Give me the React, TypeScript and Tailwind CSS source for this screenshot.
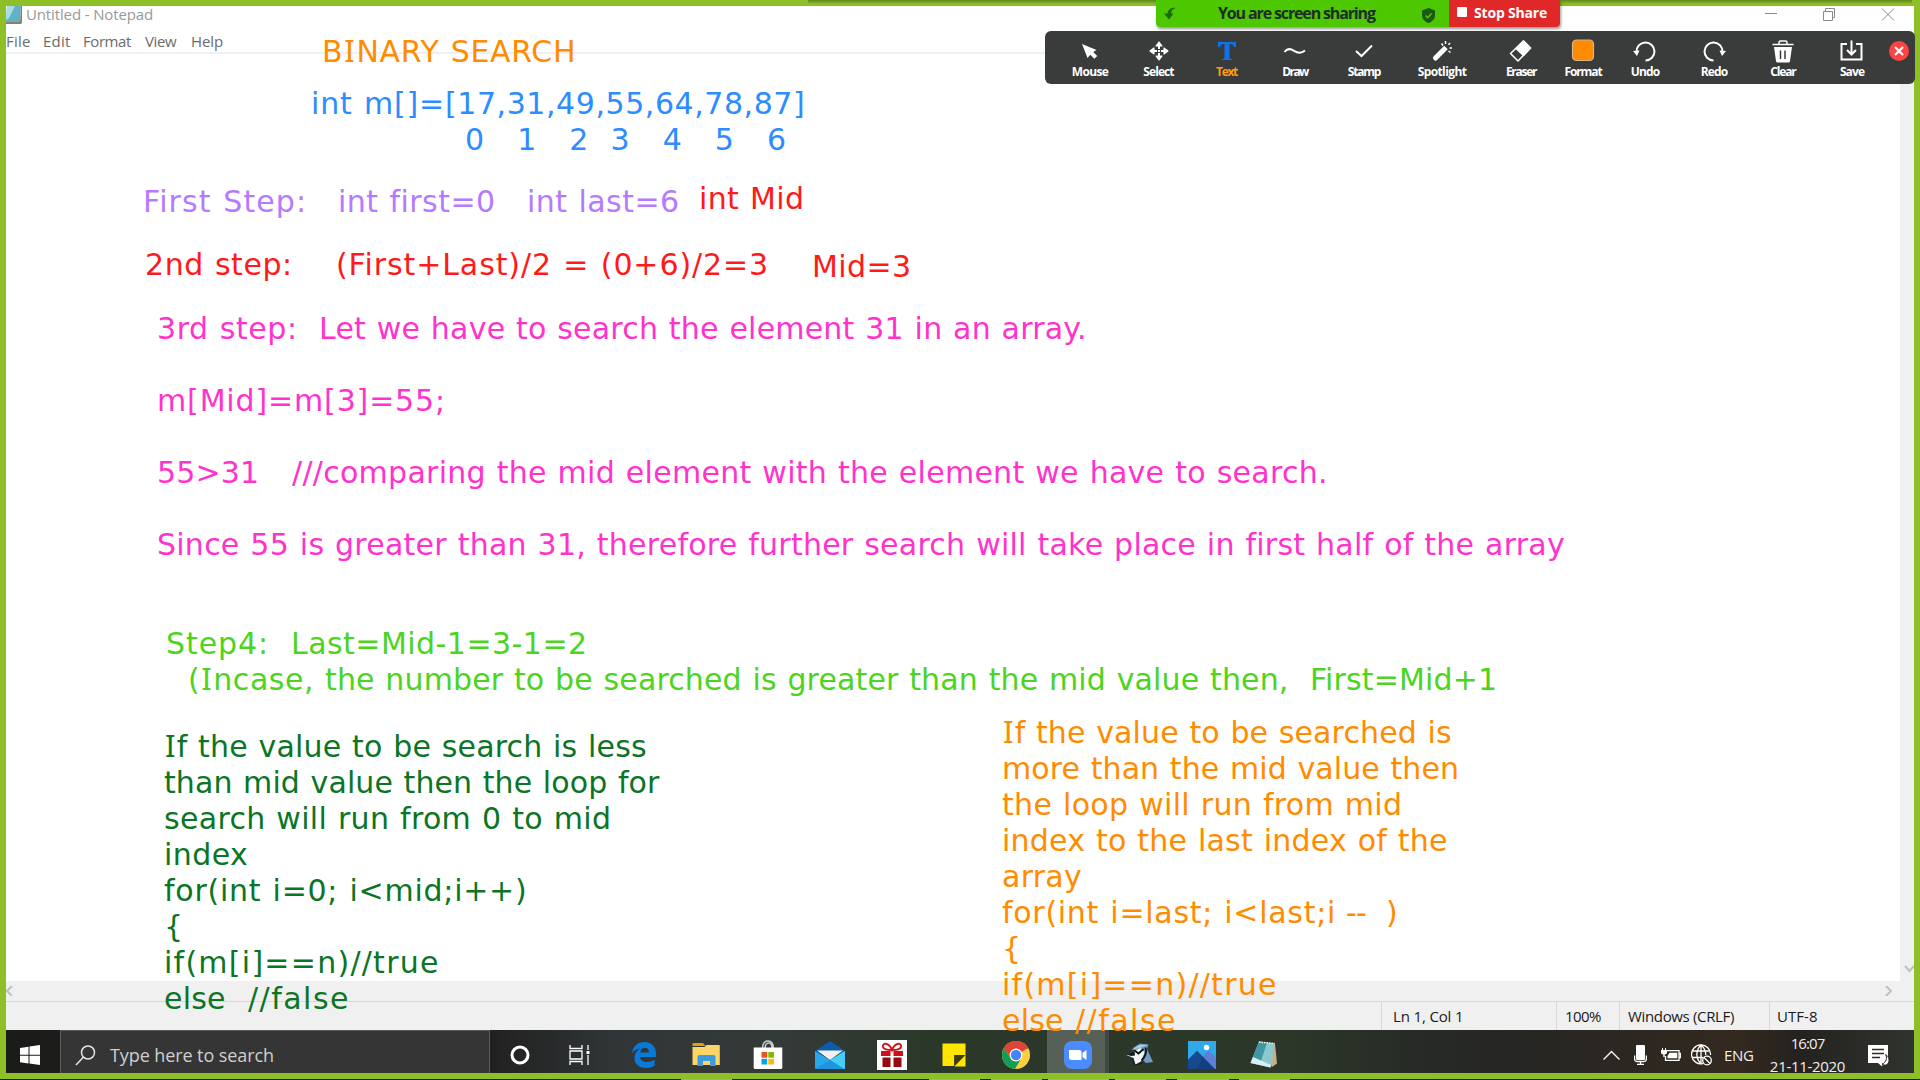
import React, { useLayoutEffect, useRef } from "react";

type FitProps = { text: string; w: number; className?: string };

/** A single line of text whose tracking is adjusted so that its last glyph ends `w` pixels from its origin. */
function Fit({ text, w, className = "" }: FitProps) {
  const ref = useRef<HTMLSpanElement>(null);
  useLayoutEffect(() => {
    const el = ref.current;
    if (!el || text.length < 2) return;
    const cs = getComputedStyle(el);
    const ctx = document.createElement("canvas").getContext("2d");
    if (!ctx) return;
    ctx.font = `${cs.fontWeight} ${cs.fontSize} ${cs.fontFamily}`;
    const last = ctx.measureText(text.slice(-1));
    const bearing = last.width - last.actualBoundingBoxRight;
    el.style.letterSpacing = "0px";
    const natural = el.getBoundingClientRect().width - bearing;
    el.style.letterSpacing = `${(w - natural) / (text.length - 1)}px`;
  }, [text, w]);
  const serifI = className.includes("serif-i");
  return (
    <span className={`block whitespace-pre ${className}`}>
      <span ref={ref}>
        {serifI
          ? text.split(/(I)/).map((part, i) =>
              part === "I" ? (
                <span key={i} className="mx-px font-['Noto_Sans',sans-serif] text-[31px] leading-none">I</span>
              ) : (
                part
              ),
            )
          : text}
      </span>
    </span>
  );
}

/** text, width of its ink, and (when another segment follows) the distance to that segment's origin */
type Segment = [string, number, number?];
type Note = { pos: string; lines: Segment[][] };

const notes: Note[] = [
  { pos: "left-[322px] top-[34px] text-[#ff8c00]", lines: [[["BINARY SEARCH", 251]]] },
  {
    pos: "left-[311px] top-[86px] text-[#2d8cff]",
    lines: [[["int m[]=", 130, 134], ["[17,31,49,55,64,78,87]", 358]]],
  },
  { pos: "left-[465px] top-[122px] text-[#2d8cff]", lines: [[["0   1   2  3   4   5   6", 320]]] },
  {
    pos: "left-[143px] top-[184px] text-[#b57aff]",
    lines: [[["First Step:", 160, 195], ["int first=0", 156, 189], ["int last=6", 151]]],
  },
  { pos: "left-[699px] top-[181px] text-[#ff1a1a]", lines: [[["int Mid", 103]]] },
  {
    pos: "left-[145px] top-[247px] text-[#ff1a1a]",
    lines: [[["2nd step:", 144, 191], ["(First+Last)/2 = (0+6)/2=3", 430]]],
  },
  { pos: "left-[812px] top-[249px] text-[#ff1a1a]", lines: [[["Mid=3", 97]]] },
  {
    pos: "left-[157px] top-[311px] text-[#ff33cc]",
    lines: [
      [["3rd step:", 137, 162], ["Let we have to search the element 31 in an array.", 765]],
      [],
      [["m[Mid]=m[3]=55;", 285]],
      [],
      [["55>31", 100, 135], ["///comparing the mid element with the element we have to search.", 1033]],
      [],
      [["Since 55 is greater than 31, therefore further search will take place in first half of the array", 1407]],
    ],
  },
  {
    pos: "left-[166px] top-[626px] text-[#4cd41e]",
    lines: [[["Step4:", 99, 125], ["Last=Mid-1=3-1=2", 294]]],
  },
  {
    pos: "left-[188px] top-[662px] text-[#4cd41e]",
    lines: [
      [
        ["(Incase,", 123, 137],
        ["the number to be searched is greater than the mid value then,  First=Mid+1", 1170],
      ],
    ],
  },
  {
    pos: "left-[164px] top-[729px] text-[#0b7526]",
    lines: [
      [["If the value to be search is less", 482]],
      [["than mid value then the loop for", 496]],
      [["search will run from 0 to mid", 445]],
      [["index", 83]],
      [["for(int i=0; i<mid;i++)", 361]],
      [["{", 16]],
      [["if(m[i]==n)//true", 273]],
      [["else", 60, 84], ["//false", 99]],
    ],
  },
  {
    pos: "left-[1002px] top-[715px] text-[#ff8c00]",
    lines: [
      [["If the value to be searched is", 449]],
      [["more than the mid value then", 455]],
      [["the loop will run from mid", 398]],
      [["index to the last index of the", 444]],
      [["array", 79]],
      [["for(int i=last; i<last;i", 331, 344], ["--", 20, 40], [")", 12]],
      [["{", 16]],
      [["if(m[i]==n)//true", 273]],
      [["else", 60, 73], ["//false", 99]],
    ],
  },
];

function Notes() {
  return (
    <>
      {notes.map((n, i) => (
        <div
          key={i}
          className={`absolute ${n.pos} font-['DejaVu_Sans',sans-serif] text-[30px] leading-[36px] [word-spacing:1px]`}
        >
          {n.lines.map((segments, j) => (
            <div key={j} className="flex h-9">
              {segments.map(([t, w, advance]) => (
                <div key={t} className="shrink-0" style={{ width: advance }}>
                  <Fit text={t} w={w} className="serif-i" />
                </div>
              ))}
            </div>
          ))}
        </div>
      ))}
    </>
  );
}

/* ---------- sharing toolbar ---------- */

const tools: { label: string; w: number; cell: string; color?: string; icon: React.ReactNode }[] = [
  {
    label: "Mouse", w: 37, cell: "w-[68px]",
    icon: <path d="M4 5L18.500 11l-3.300 1.900 4 4-2.900 2.900-4-4L9.500 19z" fill="#fff" />,
  },
  {
    label: "Select", w: 31, cell: "w-[69px]",
    icon: (
      <g fill="#fff" stroke="#fff" strokeWidth="1.200" strokeLinejoin="round">
        <path d="M12 3l3 4H9zM12 21l3-4H9zM3 12l4-3v6zM21 12l-4-3v6z" />
        <path d="M12 6v4M12 14v4M6 12h4M14 12h4" strokeWidth="2" />
        <rect x="11" y="11" width="2" height="2" stroke="none" />
      </g>
    ),
  },
  {
    label: "Text", w: 22, cell: "w-[67px]", color: "text-[#ff9d0a]",
    icon: <path d="M3 3h18v5h-2c-.4-2-1.400-3-3.500-3h-1v13.500c0 1 .6 1.500 2.500 1.500v1H7v-1c1.900 0 2.500-.5 2.500-1.500V5h-1C6.400 5 5.400 6 5 8H3z" fill="#0e72ed" />,
  },
  {
    label: "Draw", w: 28, cell: "w-[70px]",
    icon: <path d="M1.500 13c3-4 6-3.500 9.500-1.200S18.500 14.500 22 11.500" stroke="#fff" strokeWidth="2" fill="none" />,
  },
  { label: "Stamp", w: 34, cell: "w-[68px]", icon: <path d="M4 12l5.500 5L20 6.500" stroke="#fff" strokeWidth="2" fill="none" /> },
  {
    label: "Spotlight", w: 49, cell: "w-[88px]",
    icon: (
      <g stroke="#fff" fill="none">
        <path d="M5.500 19L13 11.500" strokeWidth="5" strokeLinecap="round" />
        <path d="M13.500 11L16 8.500" strokeWidth="5" />
        <path d="M11.500 4.500l1.500 2M15.500 2v3M20 4l-1.500 1.800M19.500 9H22M18.500 12l2 1.500" strokeWidth="1.500" />
      </g>
    ),
  },
  {
    label: "Eraser", w: 32, cell: "w-[70px]",
    icon: (
      <g stroke="#fff" strokeWidth="1.500" strokeLinejoin="round">
        <path d="M14.500 2l7 7L9 22l-7.500-7.500z" fill="none" />
        <path d="M14.500 2l7 7-7 7.500-7.500-7z" fill="#fff" />
      </g>
    ),
  },
  {
    label: "Format", w: 38, cell: "w-[54px]",
    icon: <rect x="1.500" y="1" width="21" height="20.500" rx="4" fill="#ff8c00" stroke="#d9b48a" strokeWidth="1.200" />,
  },
  {
    label: "Undo", w: 29, cell: "w-[70px]",
    icon: (
      <g>
        <path d="M3.500 13A9 9 0 1 1 12.500 21.500" stroke="#fff" strokeWidth="2" fill="none" />
        <path d="M0 12l6.500-.5-2.500 5.500z" fill="#fff" />
      </g>
    ),
  },
  {
    label: "Redo", w: 27, cell: "w-[68px]",
    icon: (
      <g>
        <path d="M20.500 13A9 9 0 1 0 11.500 21.500" stroke="#fff" strokeWidth="2" fill="none" />
        <path d="M24 12l-6.500-.5 2.500 5.500z" fill="#fff" />
      </g>
    ),
  },
  {
    label: "Clear", w: 27, cell: "w-[70px]",
    icon: (
      <g>
        <path d="M1.500 5.500h21" stroke="#fff" strokeWidth="1.500" />
        <path d="M8 5V3.500Q8 2 9.500 2h5Q16 2 16 3.500V5" stroke="#fff" strokeWidth="1.500" fill="none" />
        <path d="M3 8h18l-2 14q-.2 1.500-1.500 1.500h-11Q5.200 23.500 5 22z" fill="#fff" />
        <path d="M9.500 11.500v8.500M14 11.500v8.500" stroke="#3a3b3b" strokeWidth="1.500" />
      </g>
    ),
  },
  {
    label: "Save", w: 25, cell: "w-[68px]",
    icon: (
      <path d="M7 5H1.500v15.500h20V5H16M11.500 1.500V15M7 11l4.500 4.500L16 11" stroke="#fff" strokeWidth="2" fill="none" />
    ),
  },
];

function AnnotationBar() {
  return (
    <div className="absolute left-[1045px] top-[31px] flex h-[53px] w-[870px] rounded-md bg-[#3a3b3b] pl-[11px]">
      {tools.map((t) => (
        <div key={t.label} className={`flex shrink-0 flex-col items-center pt-2 ${t.cell} ${t.color ?? "text-white"}`}>
          <svg width="24" height="24" viewBox="0 0 24 24">{t.icon}</svg>
          <Fit text={t.label} w={t.w} className="pt-px font-['Open_Sans',sans-serif] text-[12px] leading-4 font-bold" />
        </div>
      ))}
      <svg className="ml-[3px] mt-2.5 shrink-0" width="20" height="20" viewBox="0 0 20 20">
        <circle cx="10" cy="10" r="10" fill="#ff4242" />
        <path d="M6 6l8 8M14 6l-8 8" stroke="#fff" strokeWidth="2.200" />
      </svg>
    </div>
  );
}

function ShareBanner() {
  return (
    <div className="absolute left-[1156px] top-0 flex h-[27px] w-[404px] overflow-hidden rounded-b font-['Open_Sans',sans-serif] font-bold shadow-[1px_2px_3px_rgba(0,0,0,0.4)]">
      <div className="flex w-[293px] items-center bg-[#4cc700] text-[#1f2d2a]">
        <svg className="ml-2 shrink-0" width="12" height="13" viewBox="0 0 12 13">
          <path d="M11.500 1C8 0 4 2 3.500 6.500H0l5 6 4.500-6H7C7 4 9 2 11.500 1z" fill="#1c6b00" />
        </svg>
        <Fit text="You are screen sharing" w={158} className="ml-[42px] w-[158px] text-[16px] leading-[27px]" />
        <svg className="ml-[46px] mt-[3px] shrink-0" width="13" height="15" viewBox="0 0 13 15">
          <path d="M6.500 0L13 2.500v4.500c0 4-2.500 6.500-6.500 8C2.500 13.500 0 11 0 7V2.500z" fill="#1c5a12" />
          <path d="M3.500 7.500l2.200 2.200L9.500 5.500" stroke="#4cc700" strokeWidth="1.600" fill="none" />
        </svg>
      </div>
      <div className="flex flex-1 bg-[#e02828] text-white">
        <div className="ml-2 mt-[7px] size-2.5 rounded-[1px] bg-white" />
        <Fit text="Stop Share" w={73} className="ml-[7px] text-[14px] leading-[25px]" />
      </div>
    </div>
  );
}

/* ---------- Notepad window ---------- */

const ui = "font-['Open_Sans',sans-serif]";

function NotepadIcon({ className }: { className?: string }) {
  return (
    <svg className={className} width="17" height="18" viewBox="0 0 17 18">
      <path d="M1 0h14l-1 16H0z" fill="#5fb3c6" />
      <path d="M1 0h8L3 12 0 14z" fill="#a8dce6" />
      <path d="M0 16h14l1-16h1v16.500l-1 1.500H0z" fill="#8b7f68" />
    </svg>
  );
}

function Notepad() {
  return (
    <div className={`flex h-[1024px] flex-col bg-white px-1.5 ${ui}`}>
      <div className="flex h-[23px] items-start text-[#999]">
        <NotepadIcon className="shrink-0" />
        <Fit text="Untitled - Notepad" w={126} className="ml-[3px] text-[15px] leading-[16px]" />
        <svg className="ml-auto mr-[19px] mt-0.5" width="130" height="13" viewBox="0 0 130 13" fill="none" stroke="#8a8a8a">
          <path d="M0 5.500h12M58.500 3.500h9v9h-9zM60.500 3V.5h9v9h-2.500M117 .5l12 12M129 .5l-12 12" />
        </svg>
      </div>
      <div className="flex h-[23px] text-[15px] leading-[24px] text-[#6b6b6b]">
        <Fit text="File" w={24} className="w-[37px]" />
        <Fit text="Edit" w={27} className="w-[40px]" />
        <Fit text="Format" w={48} className="w-[62px]" />
        <Fit text="View" w={32} className="w-[46px]" />
        <Fit text="Help" w={32} />
      </div>
      <div className="flex flex-1 border-t-2 border-[#f0f0f0]">
        <div className="flex-1" />
        <div className="flex w-[14px] items-end justify-end bg-[#f0f0f0] pb-2">
          <svg width="10" height="8" viewBox="0 0 10 8" fill="none" stroke="#bfbfbf" strokeWidth="2">
            <path d="M1 1l4.500 5L10 1" />
          </svg>
        </div>
      </div>
      <div className="flex h-5 items-center justify-between bg-[#f0f0f0] pr-[22px]">
        <svg width="7" height="10" viewBox="0 0 7 10" fill="none" stroke="#bfbfbf" strokeWidth="2"><path d="M6 0L1 5l5 5" /></svg>
        <svg width="7" height="10" viewBox="0 0 7 10" fill="none" stroke="#bfbfbf" strokeWidth="2"><path d="M1 0l5 5-5 5" /></svg>
      </div>
      <div className="flex h-[29px] justify-end border-t border-[#d7d7d7] bg-[#f0f0f0] text-[15px] leading-[28px] text-[#1a1a1a]">
        <div className="w-[175px] border-l border-[#d7d7d7] pl-[11px]"><Fit text="Ln 1, Col 1" w={68} /></div>
        <div className="w-[63px] border-l border-[#d7d7d7] pl-2"><Fit text="100%" w={36} /></div>
        <div className="w-[150px] border-l border-[#d7d7d7] pl-2"><Fit text="Windows (CRLF)" w={106} /></div>
        <div className="w-[145px] border-l border-[#d7d7d7] pl-[7px]"><Fit text="UTF-8" w={40} /></div>
      </div>
    </div>
  );
}

/* ---------- Taskbar ---------- */

const apps: { id: string; active?: boolean; art: React.ReactNode }[] = [
  {
    id: "edge",
    art: (
      <path
        d="M3 13C4.500 5.500 9 2 15.500 2 23 2 27 7.500 27 13.500V17H11c.3 3.500 3 5 6.800 5 2.800 0 5.200-.8 7.700-2.200v6C23 27.300 20.300 28 17 28 9.500 28 5.500 23.500 5.500 18c0-4.500 2.500-7.500 6-9.500C8 9 5 10.500 3 13zm8.300-.5H20c0-3-1.500-4.800-4.200-4.800-2.500 0-4.200 2-4.500 4.800z"
        fill="#0a7ad8"
      />
    ),
  },
  {
    id: "explorer",
    art: (
      <g>
        <path d="M1.500 4q0-1 1-1H12l2.500 3H1.500z" fill="#e2a100" />
        <path d="M1.500 7h12l2-2H28q.8 0 .8.800V25H1.500z" fill="#fbd667" />
        <path d="M6.500 26V17q0-2 2-2h14q2 0 2 2v9h-5.500v-5h-7v5z" fill="#3f9be0" />
      </g>
    ),
  },
  {
    id: "store",
    art: (
      <g>
        <path d="M9.500 9c0-5 2-8 5.500-8s5.500 3 5.500 8M12 9c0-4 1.500-6 4-6s3 2 3 6" fill="none" stroke="#c9cdcd" strokeWidth="1.500" />
        <path d="M.7 7.500h28.600v20q0 1.500-1.500 1.500H2.200Q.7 29 .7 27.500z" fill="#fff" />
        <path d="M8.500 12h5.700v5.700H8.500z" fill="#f25022" />
        <path d="M15.300 12H21v5.700h-5.700z" fill="#7fba00" />
        <path d="M8.500 18.800h5.700v5.700H8.500z" fill="#00a4ef" />
        <path d="M15.300 18.800H21v5.700h-5.700z" fill="#ffb900" />
      </g>
    ),
  },
  {
    id: "mail",
    art: (
      <g>
        <path d="M0 11L15 1l15 10v3H0z" fill="#0b5cad" />
        <path d="M2 10.500h26L15 20z" fill="#f1f1f1" />
        <path d="M0 11l15 9 15-9v17q0 1-1 1H1q-1 0-1-1z" fill="#28a8ea" />
        <path d="M30 11v17q0 1-1 1L15 20z" fill="#44cdf5" />
        <path d="M0 29l15-9 14 9z" fill="#1f94e0" />
      </g>
    ),
  },
  {
    id: "gift",
    art: (
      <g>
        <path d="M0 0h30v30H0z" fill="#fff" />
        <path d="M15 10C10 10 5 9 6 5.500S13 4 15 10c2-6 8-8 9-4.500S20 10 15 10z" fill="none" stroke="#d0121b" strokeWidth="1.800" />
        <path d="M4 11h9.500v5H4zM16.500 11H26v5h-9.500z" fill="#cf101b" />
        <path d="M5.500 17.500h8V27h-8zM16.500 17.500h8V27h-8z" fill="#970b10" />
      </g>
    ),
  },
  {
    id: "sticky",
    art: (
      <g>
        <path d="M3.500 3.500h23V15H15.300v11H3.500z" fill="#ffe500" />
        <path d="M15.300 26.500V15h11.200z" fill="#3f3a10" />
        <path d="M15.300 26.500L26.500 15v11.500z" fill="#ffe500" />
      </g>
    ),
  },
  {
    id: "chrome",
    art: (
      <g>
        <circle cx="15" cy="15" r="14" fill="#ffcd40" />
        <path d="M15 15L2.900 8A14 14 0 0 1 27.100 8z" fill="#db4437" />
        <path d="M15 8.500H27.400A14 14 0 0 0 2.900 8l6.500 10z" fill="#db4437" />
        <path d="M2.900 8A14 14 0 0 0 14 29l6-10.500-9 2z" fill="#0f9d58" />
        <circle cx="15" cy="15" r="6.400" fill="#fff" />
        <circle cx="15" cy="15" r="5.200" fill="#4285f4" />
      </g>
    ),
  },
  {
    id: "meeting",
    active: true,
    art: (
      <g>
        <rect x="1" y="1" width="28" height="28" rx="8" fill="#4a8cff" />
        <path d="M6 10h10q2.500 0 2.500 2.500V20h-10Q6 20 6 17.500z" fill="#fff" />
        <path d="M19.500 13l4-3v10l-4-3z" fill="#fff" />
      </g>
    ),
  },
  {
    id: "jay",
    art: (
      <g>
        <path d="M8 8l7-4.500 8.500 1.200L22 9l6 13-7 1-6-6z" fill="#6f9cc4" />
        <path d="M6 10l8-5 9-.5-8 3.500z" fill="#a9cbe4" />
        <path d="M1.500 15l8-4 6-3 4 4-3 9-6 3.500-2-6.500z" fill="#f3f5f6" />
        <path d="M1.500 14.500l8-3.500.5 4.500-4 .5z" fill="#15191c" />
        <path d="M9.500 10.500l4 3 5-4.500M20.500 7.500c1.500 5-1 10-4 13" stroke="#10151a" strokeWidth="2" fill="none" />
        <path d="M7.500 18l2 7.500 8-2.500" stroke="#10151a" strokeWidth="1" fill="none" />
      </g>
    ),
  },
  {
    id: "photos",
    art: (
      <g>
        <path d="M1 1h28v28H1z" fill="#2fa9ea" />
        <path d="M13 19l8.500-8.500L29 18v11H13z" fill="#5d7fd6" />
        <path d="M1 20l9-9 18 18H1z" fill="#123f80" />
        <path d="M16 17l-6-6-9 9v9h9z" fill="#17498f" />
        <circle cx="19.500" cy="7.500" r="2.700" fill="#fff" />
      </g>
    ),
  },
  {
    id: "notepad",
    art: (
      <g>
        <path d="M11 2l15 1.500 2 20-5 3.500z" fill="#c4b08a" />
        <path d="M10 1.500L25.500 3.500 21.500 27.500 1.500 23z" fill="#8cc9cf" />
        <path d="M10 1.500l8 1L12 21l-10.500 2z" fill="#3f97a3" />
        <path d="M4 17l18 8-.5 2.500L1.500 23z" fill="#d8f0f1" />
        <path d="M10 2l15.500 1.500" stroke="#eef6f6" strokeWidth="1.500" strokeDasharray="1.500 1" />
      </g>
    ),
  },
];

function Taskbar() {
  return (
    <div className={`flex h-[43px] px-1.5 ${ui} bg-[linear-gradient(90deg,#1b1b1a_0px,#201f1e_480px,#303637_620px,#343a38_780px,#2b3829_930px,#2c3729_1290px,#272a26_1420px,#262624_1520px,#33291f_1740px,#24221f_1800px,#30342e_1914px)]`}>
      <div className="flex w-[54px] shrink-0 pl-3.5 pt-[15px]">
        <svg width="20" height="20" viewBox="0 0 20 20" fill="#fff">
          <path d="M0 3l8.500-1.200v8H0zM9.500 1.600L20 0v9.800H9.500zM0 10.700h8.500v7.700L0 17.200zM9.500 10.700H20V20L9.500 18.500z" />
        </svg>
      </div>
      <div className="flex w-[430px] shrink-0 border-x border-t border-[#5c5c5c] bg-[#353535] pl-3.5">
        <svg className="mt-3.5 shrink-0" width="21" height="21" viewBox="0 0 21 21" fill="none" stroke="#e6e6e6" strokeWidth="1.500">
          <circle cx="13" cy="7.500" r="6.500" />
          <path d="M8.500 12L1 20" />
        </svg>
        <Fit text="Type here to search" w={163} className="ml-[14px] text-[18px] leading-[49px] text-[#cfcfcf]" />
      </div>
      <div className="flex w-[59px] shrink-0 items-center justify-center pt-1.5">
        <svg width="20" height="20" viewBox="0 0 20 20"><circle cx="10" cy="10" r="8" fill="none" stroke="#fff" strokeWidth="3" /></svg>
      </div>
      <div className="flex w-16 shrink-0 items-center justify-center pr-[3px] pt-1.5">
        <svg width="21" height="20" viewBox="0 0 21 20" fill="none" stroke="#fff" strokeWidth="1.300">
          <path d="M1 0v3.500h12V0M1 20v-3.500h12V20M1 6h12v8H1zM19 0v5M19 10v10" />
          <path d="M17.500 6h3v3h-3z" fill="#fff" stroke="none" />
        </svg>
      </div>
      {apps.map((a) => (
        <div key={a.id} className={a.active ? "flex w-[62px] shrink-0 justify-center border-r-4 border-[#414a41] bg-[#566056] pl-1 pt-2.5" : "flex w-[62px] shrink-0 justify-center pt-2.5"}>
          <svg width="30" height="30" viewBox="0 0 30 30">{a.art}</svg>
        </div>
      ))}
      <div className="ml-auto flex shrink-0 pr-6 text-[15px] text-[#f0f0f0]">
        <svg className="mt-5" width="17" height="10" viewBox="0 0 17 10" fill="none" stroke="#f0f0f0" strokeWidth="1.500"><path d="M.5 9.500l8-8 8 8" /></svg>
        <svg className="ml-3.5 mt-[15px]" width="13" height="20" viewBox="0 0 13 20">
          <rect x="2" y="0" width="9" height="15" rx="1" fill="#fff" />
          <path d="M.6 10.500V14q0 2.500 2.500 2.500h6.800q2.500 0 2.500-2.500v-3.500M6.500 16v3M3 19.300h7" stroke="#fff" strokeWidth="1.300" fill="none" />
        </svg>
        <svg className="ml-3.5 mt-[18px]" width="20" height="14" viewBox="0 0 20 14">
          <path d="M6 2.700h12v9.600H4.500V8M18 5.500h1.500v4H18" stroke="#fff" strokeWidth="1.300" fill="none" />
          <path d="M8.500 4.800h7.800v5.400H6.500V8z" fill="#fff" />
          <path d="M0 2h6v2.500Q6 6.500 3.700 6.500V9H2.300V6.500Q0 6.500 0 4.500zM1 0h1v2H1zM4 0h1v2H4z" fill="#fff" />
        </svg>
        <svg className="ml-2.5 mt-3.5" width="22" height="22" viewBox="0 0 22 22" fill="none" stroke="#fff" strokeWidth="1.300">
          <path d="M12 19.700A9.500 9.500 0 1 1 19.500 11" />
          <path d="M10 19.500c-5.500-5-5.500-13 0-18.500 3.500 3 4.800 6 4.800 10M1.500 7h17M1 13.500h11M10 1v19" />
          <circle cx="16" cy="16.500" r="4.300" />
          <path d="M13 13.500l6 6" />
        </svg>
        <Fit text="ENG" w={29} className="ml-[11px] w-[45px] leading-[50px]" />
        <div className="flex w-[77px] flex-col items-center">
          <Fit text="16:07" w={34} className="h-[23px] leading-[27px]" />
          <Fit text="21-11-2020" w={75} className="h-5 leading-[26px]" />
        </div>
        <svg className="ml-[22px] mt-[15px]" width="22" height="22" viewBox="0 0 22 22">
          <path d="M0 0h20v18h-5l-1 3.500L10 18H0z" fill="#fff" />
          <path d="M4 4.500h12M4 8.500h12M4 12.500h8" stroke="#2c2a26" strokeWidth="1.300" />
          <path d="M17.500 9.500c2 3 1 8-3.500 9.500 3 2.500 7 .5 7-3.500 0-3-1.500-5-3.500-6z" fill="#fff" stroke="#2c2a26" strokeWidth="1" />
        </svg>
      </div>
    </div>
  );
}

/** Running-app underlines along the last pixel row. */
function Underlines() {
  return (
    <div className="flex h-px bg-[#1f251c] pl-[681px]">
      <div className="w-[51px] bg-[#a3ab9b]" />
      <div className="ml-[197px] w-[51px] bg-[#a3ab9b]" />
      <div className="ml-[11px] w-[51px] bg-[#a3ab9b]" />
      <div className="ml-1.5 w-[61px] bg-[#a3ab9b]" />
      <div className="ml-1.5 w-[51px] bg-[#a3ab9b]" />
      <div className="ml-[11px] w-[52px] bg-[#a3ab9b]" />
      <div className="ml-2.5 w-[51px] bg-[#a3ab9b]" />
    </div>
  );
}

export default function App() {
  return (
    <div className="relative flex h-[1080px] w-[1920px] flex-col overflow-hidden bg-white">
      <div className="h-1.5 shrink-0 bg-[#8dbf26]" />
      <Notepad />
      <Taskbar />
      <div className="h-1.5 shrink-0 bg-[#8dbf26]" />
      <Underlines />
      <Notes />
      <div className="pointer-events-none absolute inset-x-0 top-0 h-[1079px] border-[6px] border-[#8dbf26]" />
      <div className="absolute left-[808px] top-0 h-1 w-[1104px] bg-linear-to-b from-black/30 to-transparent" />
      <ShareBanner />
      <AnnotationBar />
    </div>
  );
}
